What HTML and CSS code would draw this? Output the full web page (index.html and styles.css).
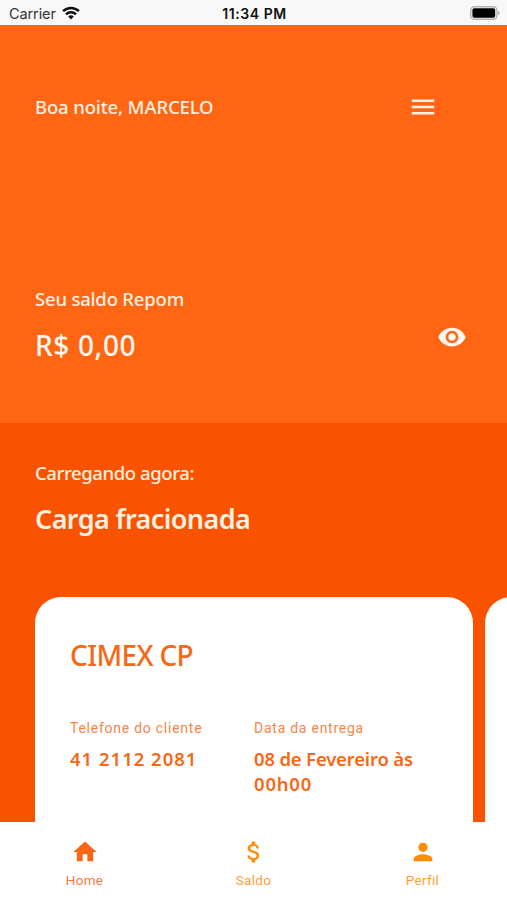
FILE: index.html
```html
<!DOCTYPE html>
<html lang="pt-BR">
<head>
  <meta charset="UTF-8" />
  <meta name="viewport" content="width=device-width, initial-scale=1.0" />
  <title>Repom</title>
  <link rel="stylesheet" href="styles.css">
</head>
<body>
  <!-- Barra de status -->
  <div class="status">
    <div class="status--carrier">
      <span>Carrier</span>
      <svg class="wifi" viewBox="0 0 18 14">
        <path d="M9 13.6 L6.2 10.6 A4 4 0 0 1 11.8 10.6 Z" fill="#111" />
        <path d="M4 8.3 A7.2 7.2 0 0 1 14 8.3" />
        <path d="M1.1 5.1 A11.4 11.4 0 0 1 16.9 5.1" />
      </svg>
    </div>
    <span class="status--hora">11:34 PM</span>
    <div class="status--bateria">
      <svg class="bateria" viewBox="0 0 30 14">
        <rect x="0.7" y="0.7" width="26.2" height="12.6" rx="3.6" fill="#f8f8f8" stroke="#b2b2b2" stroke-width="1.4" />
        <rect x="2.4" y="2.3" width="22.8" height="9.4" rx="1.8" fill="#000" />
        <path d="M28 4.8 Q29.8 5.6 29.8 7 T28 9.2 Z" fill="#b2b2b2" />
      </svg>
    </div>
  </div>

  <header class="topo">
    <div class="saudacao">
      <h2 class="texto boa-noite">Boa noite, MARCELO</h2>
      <svg class="menu" viewBox="0 0 24 24"><path d="M3 18h18v-2H3v2zm0-5h18v-2H3v2zm0-7v2h18V6H3z" /></svg>
    </div>
    <div class="saldo">
      <div>
        <h2 class="texto seu-saldo">Seu saldo Repom</h2>
        <p class="destaque valor">R$ 0,00</p>
      </div>
      <svg class="olho" viewBox="0 0 24 24"><path d="M12 4.5C7 4.5 2.73 7.61 1 12c1.73 4.39 6 7.5 11 7.5s9.27-3.11 11-7.5c-1.73-4.39-6-7.5-11-7.5zM12 17c-2.76 0-5-2.24-5-5s2.24-5 5-5 5 2.24 5 5-2.24 5-5 5zm0-8c-1.66 0-3 1.34-3 3s1.34 3 3 3 3-1.34 3-3-1.34-3-3-3z" /></svg>
    </div>
  </header>

  <main class="cargas">
    <h2 class="texto carregando">Carregando agora:</h2>
    <p class="destaque tipo">Carga fracionada</p>

    <div class="cards">
      <div class="card">
        <h3 class="destaque cliente">CIMEX CP</h3>
        <div class="dados">
          <div>
            <p class="rotulo telefone">Telefone do cliente</p>
            <p class="info numero">41 2112 2081</p>
          </div>
          <div>
            <p class="rotulo entrega">Data da entrega</p>
            <p class="info data">08 de Fevereiro às <span class="hora">00h00</span></p>
          </div>
        </div>
      </div>
      <div class="card"></div>
    </div>
  </main>

  <!-- Navegação -->
  <nav class="abas">
    <a class="aba ativa">
      <svg viewBox="0 0 24 24"><path d="M10 20v-6h4v6h5v-8h3L12 3 2 12h3v8z" /></svg>
      <span>Home</span>
    </a>
    <a class="aba">
      <svg viewBox="0 0 24 24"><path d="M11.8 10.9c-2.27-.59-3-1.2-3-2.15 0-1.09 1.01-1.85 2.7-1.85 1.78 0 2.44.85 2.5 2.1h2.21c-.07-1.72-1.12-3.3-3.21-3.81V3h-3v2.16c-1.94.42-3.5 1.68-3.5 3.61 0 2.31 1.91 3.46 4.7 4.13 2.5.6 3 1.48 3 2.41 0 .69-.49 1.79-2.7 1.79-2.06 0-2.87-.92-2.98-2.1h-2.2c.12 2.19 1.76 3.42 3.68 3.83V21h3v-2.15c1.95-.37 3.5-1.5 3.5-3.55 0-2.84-2.43-3.81-4.7-4.4z" /></svg>
      <span>Saldo</span>
    </a>
    <a class="aba">
      <svg viewBox="0 0 24 24"><path d="M12 12c2.21 0 4-1.79 4-4s-1.79-4-4-4-4 1.79-4 4 1.79 4 4 4zm0 2c-2.67 0-8 1.34-8 4v2h16v-2c0-2.66-5.33-4-8-4z" /></svg>
      <span>Perfil</span>
    </a>
  </nav>
</body>
</html>
```
FILE: styles.css
```css
* {
  box-sizing: border-box;
  margin: 0;
  padding: 0;
}

body {
  height: 900px;
  display: flex;
  flex-direction: column;
  overflow: hidden;
  font-family: "Noto Sans", sans-serif;
  background-color: #fff;
}

svg {
  display: block;
}

.status {
  height: 25px;
  padding: 2px 7px 0 9px;
  display: grid;
  grid-template-columns: 1fr auto 1fr;
  align-items: center;
  background-color: #f8f8f8;
  color: #111;
  font-family: Inter, sans-serif;
  font-size: 14.5px;
}

.status--carrier {
  display: flex;
  align-items: center;
  gap: 6px;
  color: #333;
  letter-spacing: -0.1px;
}

.status--hora {
  font-size: 14px;
  font-weight: 600;
  letter-spacing: 0.55px;
}

.status--bateria {
  display: flex;
  justify-content: flex-end;
}

.wifi {
  width: 18px;
  height: 14px;
  margin-top: -2px;
  fill: none;
  stroke: #111;
  stroke-width: 2.5;
}

.wifi path:first-child {
  stroke: none;
}

.bateria {
  width: 30px;
  height: 14px;
  margin-top: -2px;
}

.topo {
  height: 398px;
  padding: 67px 40px 0 35px;
  background-color: #ff6613;
  color: #fff0e0;
}

.saudacao {
  height: 30px;
  padding-right: 29px;
  display: flex;
  justify-content: space-between;
  align-items: center;
}

.texto {
  font-size: 18.5px;
  font-weight: 500;
  line-height: 28px;
}

.destaque {
  font-size: 28px;
  font-weight: 500;
  line-height: 40px;
}

.boa-noite {
  letter-spacing: -0.15px;
}

.seu-saldo {
  letter-spacing: -0.2px;
}

.carregando {
  letter-spacing: -0.4px;
}

.menu {
  width: 30px;
  height: 30px;
  fill: #fff0e0;
}

.saldo {
  margin-top: 163px;
  display: flex;
  justify-content: space-between;
  align-items: flex-end;
}

.valor {
  margin-top: 12px;
  color: #fff8f0;
  letter-spacing: 0.65px;
}

.olho {
  width: 30px;
  height: 30px;
  margin-bottom: 13px;
  fill: #fff8f0;
}

.cargas {
  height: 399px;
  padding: 36px 0 0 35px;
  overflow: hidden;
  background-color: #fa5300;
  color: #fff0e0;
}

.tipo {
  margin-top: 12px;
  font-size: 27px;
  font-weight: 600;
  letter-spacing: -0.6px;
}

.cards {
  margin-top: 58px;
  display: flex;
  gap: 12px;
}

.card {
  flex: 0 0 438px;
  height: 300px;
  padding: 38px 35px;
  border-radius: 26px;
  background-color: #fff;
  color: #f66816;
}

.cliente {
  letter-spacing: -0.65px;
}

.dados {
  margin-top: 43px;
  display: grid;
  grid-template-columns: 184px 1fr;
}

.rotulo {
  font-family: Roboto, sans-serif;
  font-size: 14px;
  line-height: 20px;
  letter-spacing: 0.75px;
  color: #f68549;
}

.info {
  margin-top: 9px;
  font-size: 18.5px;
  font-weight: 600;
  line-height: 24.5px;
}

.numero {
  letter-spacing: 1px;
}

.data {
  letter-spacing: -0.18px;
}

.hora {
  letter-spacing: 0.8px;
}

.abas {
  height: 78px;
  padding-top: 16px;
  display: grid;
  grid-template-columns: repeat(3, 1fr);
  background-color: #fff;
}

.aba {
  display: flex;
  flex-direction: column;
  align-items: center;
  gap: 6px;
  color: #ff9e35;
  font-family: Roboto, sans-serif;
  font-size: 13.5px;
  line-height: 16px;
  letter-spacing: 0.3px;
}

.aba svg {
  width: 28px;
  height: 28px;
  fill: #ff8c05;
}

.ativa {
  color: #fb7a3c;
}

.ativa svg {
  fill: #ff6613;
}
```
